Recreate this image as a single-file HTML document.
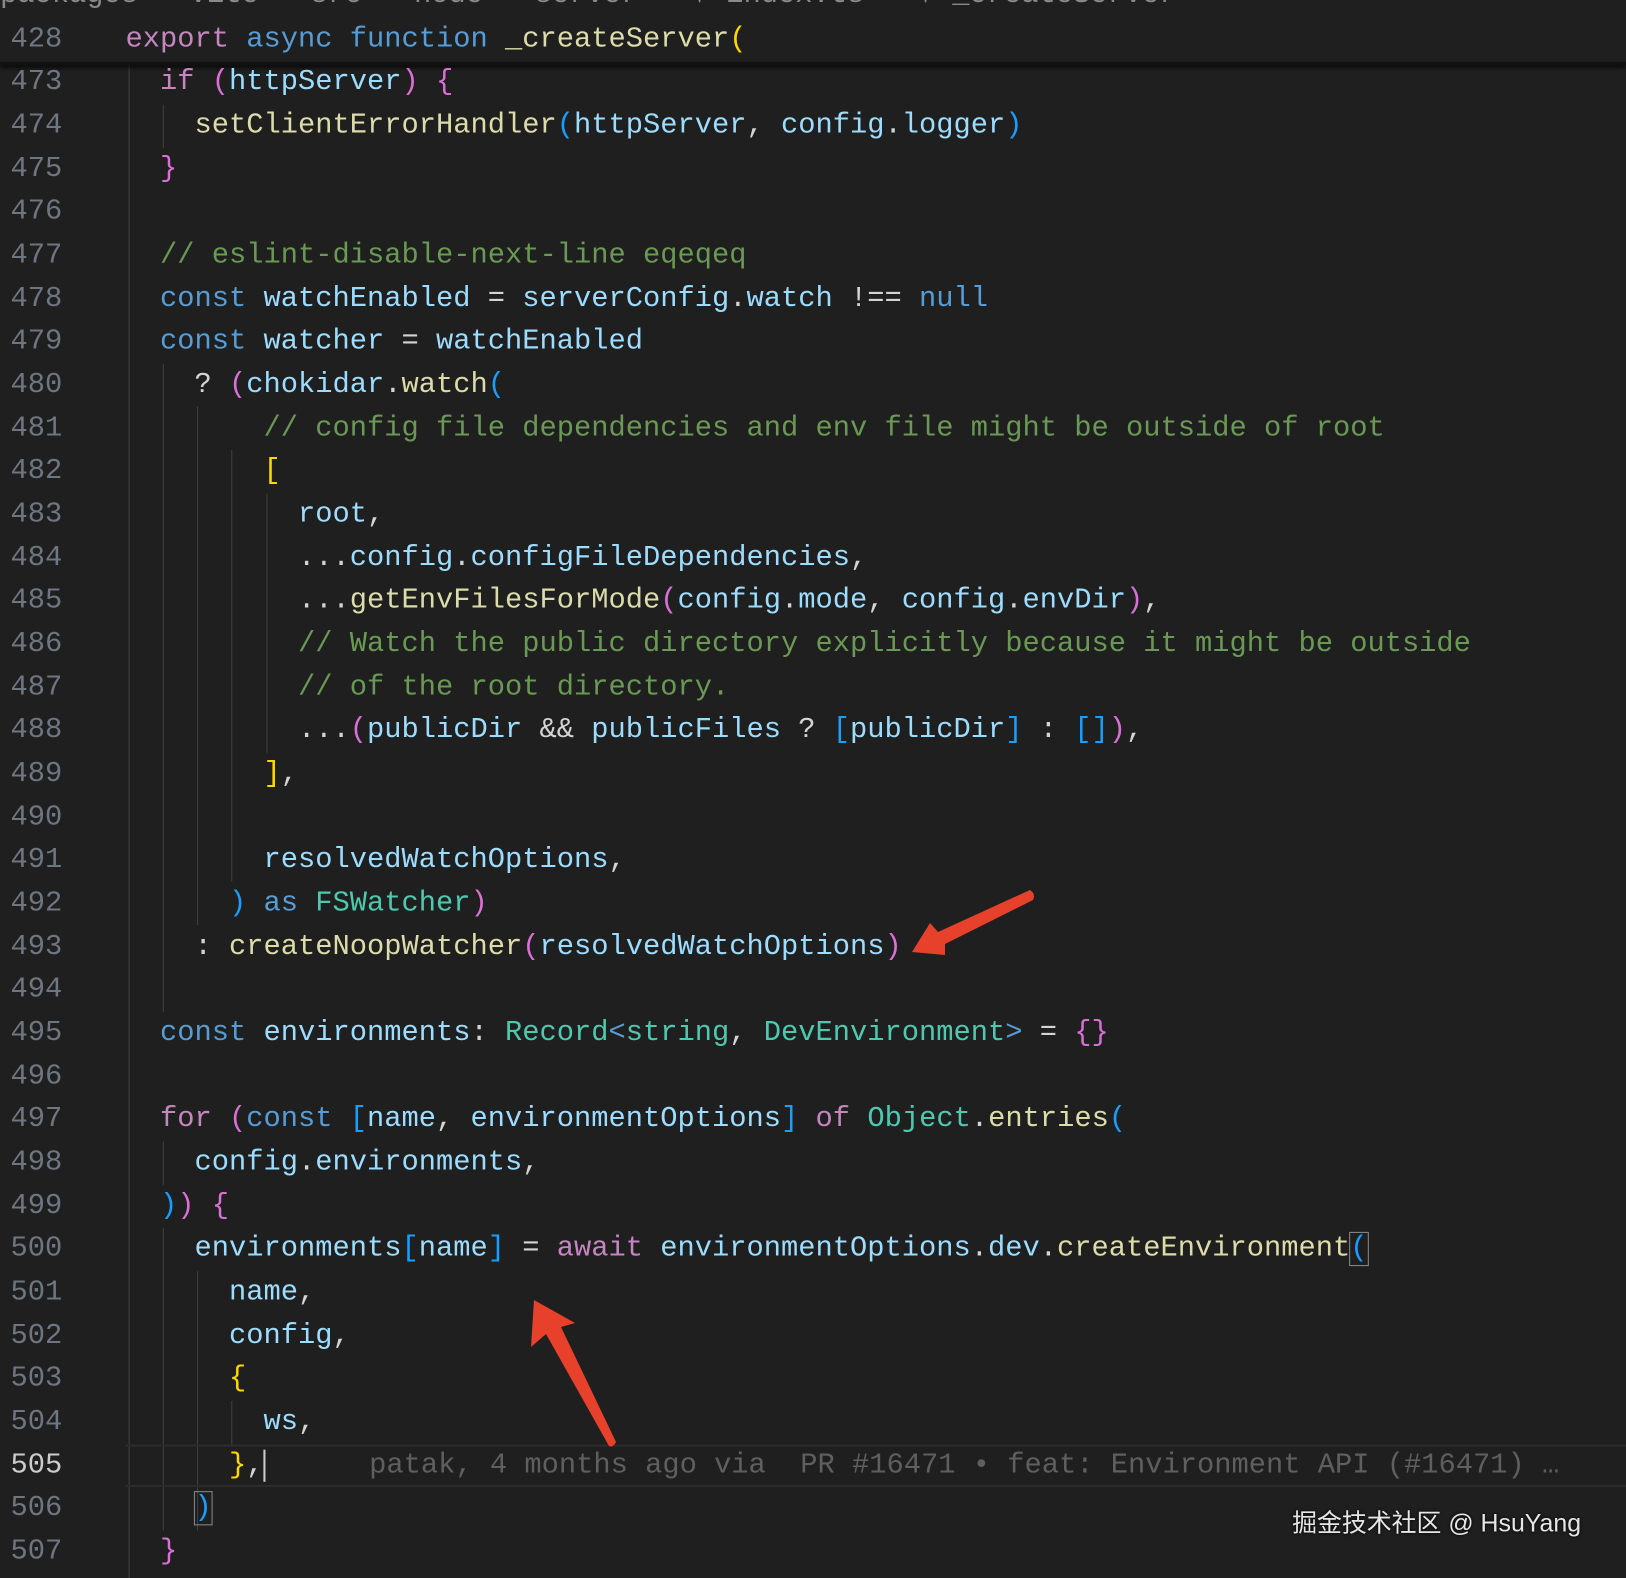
<!DOCTYPE html>
<html><head><meta charset="utf-8"><style>
html,body{margin:0;padding:0;background:#1f1f1f;width:1626px;height:1572px;overflow:hidden}
#w{position:absolute;left:0;top:2px;width:1568px;height:1516px;transform:scale(1.037);transform-origin:0 0;font-family:"Liberation Mono",monospace;font-size:27.73px}
.l{position:absolute;left:0;height:41.65px;line-height:41.65px;white-space:pre;width:1568px}
.n{position:absolute;right:1508px;color:#6e7681;text-align:right}
.c{position:absolute;left:121px;color:#d4d4d4}
.k{color:#c586c0}.b{color:#569cd6}.f{color:#dcdcaa}.v{color:#9cdcfe}.g{color:#6a9955}.t{color:#4ec9b0}
.y{color:#ffd700}.p{color:#da70d6}.u{color:#179fff}.w{color:#d4d4d4}
.gd{position:absolute;width:1px;background:#404040}
</style></head><body>
<div id="w">
<div style="position:absolute;left:0;top:-16px;color:#8a8a8a;white-space:pre;line-height:20px">packages › vite › src › node › server › ⟡ index.ts › ⟡ _createServer</div>
<div class="gd" style="left:124px;top:60px;height:1460px"></div>
<div class="gd" style="left:157px;top:99px;height:42px"></div>
<div class="gd" style="left:157px;top:349px;height:625px"></div>
<div class="gd" style="left:157px;top:1099px;height:42px"></div>
<div class="gd" style="left:157px;top:1182px;height:292px"></div>
<div class="gd" style="left:190px;top:390px;height:500px"></div>
<div class="gd" style="left:190px;top:1224px;height:250px"></div>
<div class="gd" style="left:223px;top:432px;height:416px"></div>
<div class="gd" style="left:223px;top:1349px;height:42px"></div>
<div class="gd" style="left:257px;top:474px;height:250px"></div>
<div style="position:absolute;left:121px;top:1391px;width:1447px;height:41px;border-top:2px solid #2c2c2c;border-bottom:2px solid #2c2c2c;box-sizing:border-box"></div>
<div class="l" style="top:16px"><span class="n">428</span><span class="c"><span class="k">export</span> <span class="b">async</span> <span class="b">function</span> <span class="f">_createServer</span><span class="y">(</span></span></div>
<div style="position:absolute;left:0;top:58px;width:1568px;height:3px;background:#111;box-shadow:0 2px 4px #000"></div>
<div class="l" style="top:57px"><span class="n">473</span><span class="c">  <span class="k">if</span> <span class="p">(</span><span class="v">httpServer</span><span class="p">)</span> <span class="p">{</span></span></div>
<div class="l" style="top:99px"><span class="n">474</span><span class="c">    <span class="f">setClientErrorHandler</span><span class="u">(</span><span class="v">httpServer</span>, <span class="v">config</span>.<span class="v">logger</span><span class="u">)</span></span></div>
<div class="l" style="top:141px"><span class="n">475</span><span class="c">  <span class="p">}</span></span></div>
<div class="l" style="top:182px"><span class="n">476</span></div>
<div class="l" style="top:224px"><span class="n">477</span><span class="c">  <span class="g">// eslint-disable-next-line eqeqeq</span></span></div>
<div class="l" style="top:266px"><span class="n">478</span><span class="c">  <span class="b">const</span> <span class="v">watchEnabled</span> = <span class="v">serverConfig</span>.<span class="v">watch</span> !== <span class="b">null</span></span></div>
<div class="l" style="top:307px"><span class="n">479</span><span class="c">  <span class="b">const</span> <span class="v">watcher</span> = <span class="v">watchEnabled</span></span></div>
<div class="l" style="top:349px"><span class="n">480</span><span class="c">    ? <span class="p">(</span><span class="v">chokidar</span>.<span class="f">watch</span><span class="u">(</span></span></div>
<div class="l" style="top:391px"><span class="n">481</span><span class="c">        <span class="g">// config file dependencies and env file might be outside of root</span></span></div>
<div class="l" style="top:432px"><span class="n">482</span><span class="c">        <span class="y">[</span></span></div>
<div class="l" style="top:474px"><span class="n">483</span><span class="c">          <span class="v">root</span>,</span></div>
<div class="l" style="top:516px"><span class="n">484</span><span class="c">          ...<span class="v">config</span>.<span class="v">configFileDependencies</span>,</span></div>
<div class="l" style="top:557px"><span class="n">485</span><span class="c">          ...<span class="f">getEnvFilesForMode</span><span class="p">(</span><span class="v">config</span>.<span class="v">mode</span>, <span class="v">config</span>.<span class="v">envDir</span><span class="p">)</span>,</span></div>
<div class="l" style="top:599px"><span class="n">486</span><span class="c">          <span class="g">// Watch the public directory explicitly because it might be outside</span></span></div>
<div class="l" style="top:641px"><span class="n">487</span><span class="c">          <span class="g">// of the root directory.</span></span></div>
<div class="l" style="top:682px"><span class="n">488</span><span class="c">          ...<span class="p">(</span><span class="v">publicDir</span> &amp;&amp; <span class="v">publicFiles</span> ? <span class="u">[</span><span class="v">publicDir</span><span class="u">]</span> : <span class="u">[]</span><span class="p">)</span>,</span></div>
<div class="l" style="top:724px"><span class="n">489</span><span class="c">        <span class="y">]</span>,</span></div>
<div class="l" style="top:766px"><span class="n">490</span></div>
<div class="l" style="top:807px"><span class="n">491</span><span class="c">        <span class="v">resolvedWatchOptions</span>,</span></div>
<div class="l" style="top:849px"><span class="n">492</span><span class="c">      <span class="u">)</span> <span class="b">as</span> <span class="t">FSWatcher</span><span class="p">)</span></span></div>
<div class="l" style="top:891px"><span class="n">493</span><span class="c">    : <span class="f">createNoopWatcher</span><span class="p">(</span><span class="v">resolvedWatchOptions</span><span class="p">)</span></span></div>
<div class="l" style="top:932px"><span class="n">494</span></div>
<div class="l" style="top:974px"><span class="n">495</span><span class="c">  <span class="b">const</span> <span class="v">environments</span>: <span class="t">Record</span><span class="b">&lt;</span><span class="t">string</span>, <span class="t">DevEnvironment</span><span class="b">&gt;</span> = <span class="p">{}</span></span></div>
<div class="l" style="top:1016px"><span class="n">496</span></div>
<div class="l" style="top:1057px"><span class="n">497</span><span class="c">  <span class="k">for</span> <span class="p">(</span><span class="b">const</span> <span class="u">[</span><span class="v">name</span>, <span class="v">environmentOptions</span><span class="u">]</span> <span class="k">of</span> <span class="t">Object</span>.<span class="f">entries</span><span class="u">(</span></span></div>
<div class="l" style="top:1099px"><span class="n">498</span><span class="c">    <span class="v">config</span>.<span class="v">environments</span>,</span></div>
<div class="l" style="top:1141px"><span class="n">499</span><span class="c">  <span class="u">)</span><span class="p">)</span> <span class="p">{</span></span></div>
<div class="l" style="top:1182px"><span class="n">500</span><span class="c">    <span class="v">environments</span><span class="u">[</span><span class="v">name</span><span class="u">]</span> = <span class="k">await</span> <span class="v">environmentOptions</span>.<span class="v">dev</span>.<span class="f">createEnvironment</span><span class="u" style="outline:1px solid #888">(</span></span></div>
<div class="l" style="top:1224px"><span class="n">501</span><span class="c">      <span class="v">name</span>,</span></div>
<div class="l" style="top:1266px"><span class="n">502</span><span class="c">      <span class="v">config</span>,</span></div>
<div class="l" style="top:1307px"><span class="n">503</span><span class="c">      <span class="y">{</span></span></div>
<div class="l" style="top:1349px"><span class="n">504</span><span class="c">        <span class="v">ws</span>,</span></div>
<div class="l" style="top:1391px"><span class="n" style="color:#cccccc">505</span><span class="c">      <span class="y">}</span>,<span style="border-left:2px solid #ccc"></span>      <span style="color:#5f5f5f">patak, 4 months ago via  PR #16471 • feat: Environment API (#16471) …</span></span></div>
<div class="l" style="top:1432px"><span class="n">506</span><span class="c">    <span class="u" style="outline:1px solid #888">)</span></span></div>
<div class="l" style="top:1474px"><span class="n">507</span><span class="c">  <span class="p">}</span></span></div>
<div style="position:absolute;left:1246px;top:1447px;font-family:'Liberation Sans','Noto Sans CJK SC',sans-serif;font-size:24px;color:#e6e6e6;white-space:pre;text-shadow:0 0 3px #000">掘金技术社区 @ HsuYang</div>
</div>
<svg width="1626" height="1572" style="position:absolute;left:0;top:0">
<path d="M912,952 L930,923 L938,932 L1030,890 Q1036,894 1033,900 L945,944 L945,955 Z" fill="#e8412b"/>
<path d="M534,1300 L575,1323 L561,1327 L616,1442 Q613,1448 609,1446 L546,1334 L531,1347 Z" fill="#e8412b"/>
</svg>
</body></html>
